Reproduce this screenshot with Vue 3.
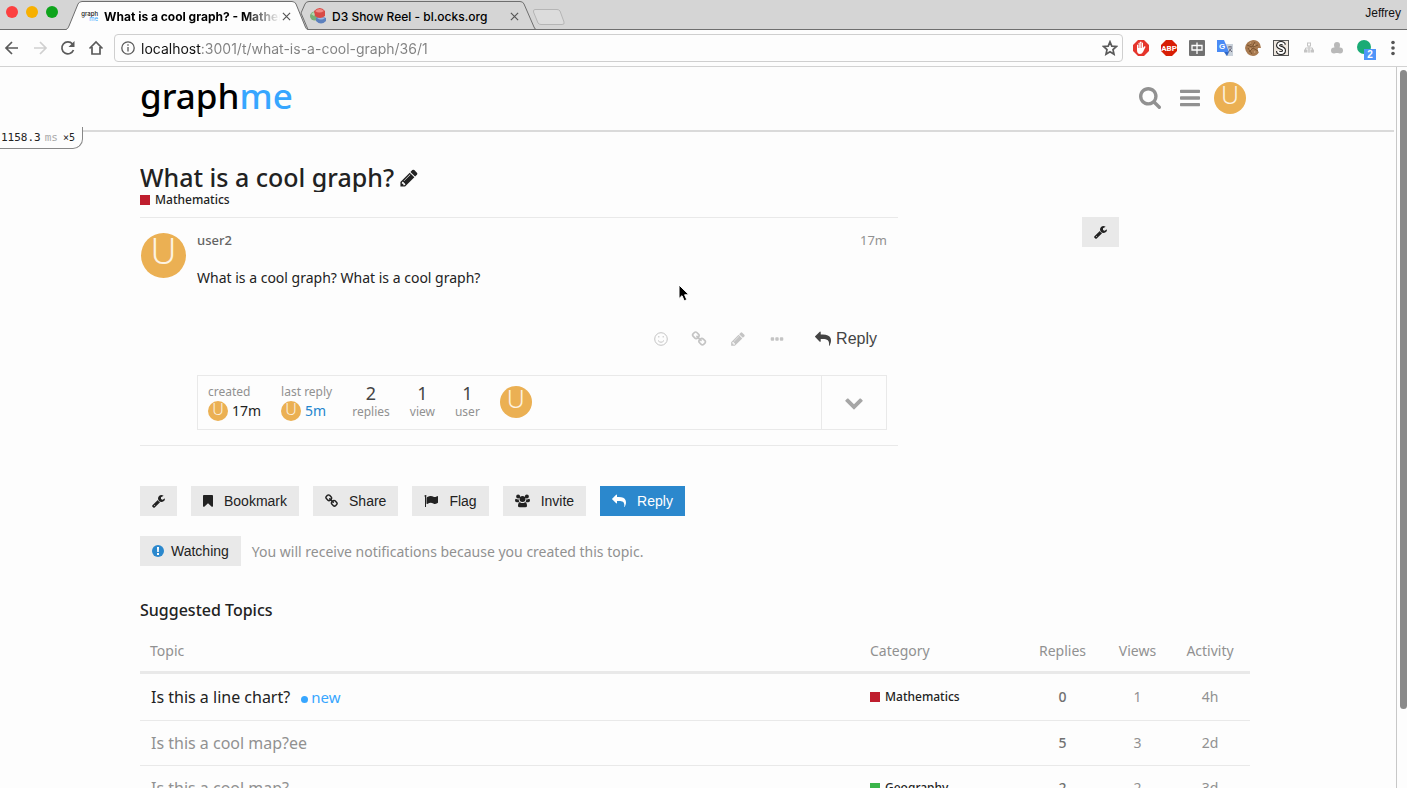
<script setup>
import { h, ref } from 'vue'

const url = ref('localhost:3001/t/what-is-a-cool-graph/36/1')

const glyphs = {
  pencil: { box: '128 0 1536 1792', d: 'M491 1536l91-91-235-235-91 91v107h128v128h107zm523-928q0-22-22-22-10 0-17 7l-542 542q-7 7-7 17 0 22 22 22 10 0 17-7l542-542q7-7 7-17zm-54-192l416 416-832 832h-416v-416zm683 96q0 53-37 90l-166 166-416-416 166-165q36-38 90-38 53 0 91 38l235 234q37 39 37 91z' },
  wrench: { box: '64 0 1664 1792', d: 'M448 1472q0-26-19-45t-45-19-45 19-19 45 19 45 45 19 45-19 19-45zm644-420l-682 682q-37 37-90 37-52 0-91-37l-106-108q-38-36-38-90 0-53 38-91l681-681q39 98 114.5 173.5t173.5 114.5zm634-435q0 39-23 106-47 134-164.5 217.5t-258.5 83.5q-185 0-316.5-131.5t-131.5-316.5 131.5-316.5 316.5-131.5q58 0 121.5 16.5t107.5 46.5q16 11 16 28t-16 28l-293 169v224l193 107q5-3 79-48.5t135.5-81 70.5-35.5q15 0 23.5 10t8.5 25z' },
  reply: { box: '0 0 1792 1792', d: 'M1792 1120q0 166-127 451-3 7-10.5 24t-13.5 30-13 22q-12 17-28 17-15 0-23.5-10t-8.5-25q0-9 2.5-26.5t2.5-23.5q5-68 5-123 0-101-17.5-181t-48.5-138.5-80-101-105.5-69.5-133-42.5-154-21.5-175.5-6h-224v256q0 26-19 45t-45 19-45-19l-512-512q-19-19-19-45t19-45l512-512q19-19 45-19t45 19 19 45v256h224q713 0 875 403 53 134 53 333z' },
  search: { box: '64 128 1664 1664', d: 'M1216 832q0-185-131.5-316.5t-316.5-131.5-316.5 131.5-131.5 316.5 131.5 316.5 316.5 131.5 316.5-131.5 131.5-316.5zm512 832q0 52-38 90t-90 38q-54 0-90-38l-343-342q-179 124-399 124-143 0-273.5-55.5t-225-150-150-225-55.5-273.5 55.5-273.5 150-225 225-150 273.5-55.5 273.5 55.5 225 150 150 225 55.5 273.5q0 220-124 399l343 343q37 37 37 90z' },
  bars: { box: '128 128 1536 1536', d: 'M1664 1344v128q0 26-19 45t-45 19h-1408q-26 0-45-19t-19-45v-128q0-26 19-45t45-19h1408q26 0 45 19t19 45zm0-512v128q0 26-19 45t-45 19h-1408q-26 0-45-19t-19-45v-128q0-26 19-45t45-19h1408q26 0 45 19t19 45zm0-512v128q0 26-19 45t-45 19h-1408q-26 0-45-19t-19-45v-128q0-26 19-45t45-19h1408q26 0 45 19t19 45z' },
  flag: { box: '0 0 1792 1792', d: 'M320 256q0 72-64 110v1266q0 13-9.5 22.5t-22.5 9.5h-64q-13 0-22.5-9.5t-9.5-22.5v-1266q-64-38-64-110 0-53 37.5-90.5t90.5-37.5 90.5 37.5 37.5 90.5zm1472 64v763q0 25-12.5 38.5t-39.5 27.5q-215 116-369 116-61 0-123.5-22t-108.5-48-115.5-48-142.5-22q-192 0-464 146-17 9-33 9-26 0-45-19t-19-45v-742q0-32 31-55 21-14 79-43 236-120 421-120 107 0 200 29t219 88q38 19 88 19 54 0 117.5-21t110-47 88-47 54.5-21q26 0 45 19t19 45z' },
  bookmark: { box: '256 0 1280 1792', d: 'M1420 128q23 0 44 9 33 13 52.5 41t19.5 62v1289q0 34-19.5 62t-52.5 41q-19 8-44 8-48 0-83-32l-441-424-441 424q-36 33-83 33-23 0-44-9-33-13-52.5-41t-19.5-62v-1289q0-34 19.5-62t52.5-41q21-9 44-9h1048z' },
  link: { box: '64 0 1664 1792', d: 'M1520 1216q0-40-28-68l-208-208q-28-28-68-28-42 0-72 32 3 3 19 18.5t21.5 21.5 15 19 13 25.5 3.5 27.5q0 40-28 68t-68 28q-15 0-27.5-3.5t-25.5-13-19-15-21.5-21.5-18.5-19q-33 31-33 73 0 40 28 68l206 207q27 27 68 27 40 0 68-26l147-146q28-28 28-67zm-703-705q0-40-28-68l-206-207q-28-28-68-28-39 0-68 27l-147 146q-28 28-28 67 0 40 28 68l208 208q27 27 68 27 42 0 72-31-3-3-19-18.5t-21.5-21.5-15-19-13-25.5-3.5-27.5q0-40 28-68t68-28q15 0 27.5 3.5t25.5 13 19 15 21.5 21.5 18.5 19q33-31 33-73zm895 705q0 120-85 203l-147 146q-83 83-203 83-121 0-204-85l-206-207q-83-83-83-203 0-123 88-209l-88-88q-86 88-208 88-120 0-204-84l-208-208q-84-84-84-204t85-203l147-146q83-83 203-83 121 0 204 85l206 207q83 83 83 203 0 123-88 209l88 88q86-88 208-88 120 0 204 84l208 208q84 84 84 204z' },
  chevron: { box: '64 128 1664 1664', d: 'M1683 808l-742 741q-19 19-45 19t-45-19l-742-741q-19-19-19-45.5t19-45.5l166-165q19-19 45-19t45 19l531 531 531-531q19-19 45-19t45 19l166 165q19 19 19 45.5t-19 45.5z' },
  dots: { box: '192 0 1408 1792', d: 'M288 704h192q96 0 96 96v192q0 96-96 96h-192q-96 0-96-96v-192q0-96 96-96zM800 704h192q96 0 96 96v192q0 96-96 96h-192q-96 0-96-96v-192q0-96 96-96zM1312 704h192q96 0 96 96v192q0 96-96 96h-192q-96 0-96-96v-192q0-96 96-96z' },
  users: { box: '0 0 1920 1792', d: 'M400 64a256 256 0 1 1 0 512a256 256 0 1 1 0-512zM1520 64a256 256 0 1 1 0 512a256 256 0 1 1 0-512zM960 256a384 384 0 1 1 0 768a384 384 0 1 1 0-768zM120 600q130 90 280 90 50 0 80-10-10 220 90 364h-350q-220 0-220-200 0-224 120-224zM1800 600q-130 90-280 90-50 0-80-10 10 220-90 364h350q220 0 220-200 0-224-120-224zM640 1050q140 110 320 110t320-110q256 20 256 480 0 174-220 174h-712q-220 0-220-174 0-460 256-480z' }
}

const Glyph = (props) =>
  h('svg', { class: 'glyph', viewBox: glyphs[props.name].box, 'aria-hidden': 'true' }, [
    h('path', { d: glyphs[props.name].d })
  ])
Glyph.props = ['name']

const actions = [
  { label: 'Bookmark', icon: 'bookmark', size: 'w10' },
  { label: 'Share', icon: 'link', size: 'w13' },
  { label: 'Flag', icon: 'flag', size: 'w14' },
  { label: 'Invite', icon: 'users', size: 'w15' },
  { label: 'Reply', icon: 'reply', size: 'w14', primary: true }
]

const stats = [
  { n: 2, label: 'replies' },
  { n: 1, label: 'view' },
  { n: 1, label: 'user' }
]

const topics = [
  { title: 'Is this a line chart?', fresh: true, category: 'Mathematics', color: 'red', replies: 0, views: 1, activity: '4h' },
  { title: 'Is this a cool map?ee', replies: 5, views: 3, activity: '2d' },
  { title: 'Is this a cool map?', category: 'Geography', color: 'green', replies: 2, views: 2, activity: '3d' }
]
</script>

<template>
  <div class="window">
    <div class="tabstrip">
      <div class="lights"><i class="close"></i><i class="min"></i><i class="max"></i></div>
      <div class="tab active">
        <svg class="shape" viewBox="0 0 242 30" preserveAspectRatio="none" aria-hidden="true">
          <path class="fill" d="M0 30L3 26L12 4Q13 1 16 1H226Q229 1 230 4L239 27L242 30z" />
          <path class="line" d="M0 29.500Q2 29 3 26L12 4Q13 1.500 16 1.500H226Q229 1.500 230 4L239 26Q240 29.500 242 29.500" />
        </svg>
        <span class="fav"><b>graph</b><em>me</em></span>
        <span class="tab-title">What is a cool graph? - Mathematics</span>
        <button class="x" aria-label="Close tab"><svg viewBox="0 0 10 10"><path d="M1 1L9 9M9 1L1 9" /></svg></button>
      </div>
      <div class="tab second">
        <svg class="shape" viewBox="0 0 236 30" preserveAspectRatio="none" aria-hidden="true">
          <path class="line" d="M1 13L5 4Q6 1.500 9 1.500H220Q223 1.500 224 4L234 27Q235 29.500 236 29.500M1 13L8 29.500" />
        </svg>
        <svg class="d3" viewBox="0 0 16 16" aria-hidden="true">
          <ellipse cx="5" cy="8" rx="5" ry="4.500" fill="#79b077" />
          <path fill="#b4d8b0" d="M1 6l3-2 2 2-2 2z" />
          <path fill="#5c80bd" d="M6 10q5-3 10 0v3q-5 5-10 0z" />
          <path fill="#9bb7e3" d="M7 10q4-2 8 0-4 3-8 0z" />
          <path fill="#d84a45" d="M4 3q6-6 11 0v5q-5 4-10 0z" />
          <path fill="#f08a84" d="M5 3q5-4 9 0-5 3-9 0z" />
        </svg>
        <span class="tab-title plain">D3 Show Reel - bl.ocks.org</span>
        <button class="x" aria-label="Close tab"><svg viewBox="0 0 10 10"><path d="M1 1L9 9M9 1L1 9" /></svg></button>
      </div>
      <button class="newtab" aria-label="New tab">
        <svg viewBox="0 0 34 18"><path d="M3 1.500H25Q27 1.500 28 3L32 14Q33 16.500 30 16.500H9Q7 16.500 6 15L1.500 4Q1 1.500 3 1.500z" /></svg>
      </button>
      <span class="profile">Jeffrey</span>
    </div>

    <div class="toolbar">
      <div class="nav">
        <button aria-label="Back"><svg viewBox="0 0 16 16"><path d="M14 8H2M8 2L2 8L8 14" /></svg></button>
        <button class="off" aria-label="Forward"><svg viewBox="0 0 16 16"><path d="M2 8H14M8 2L14 8L8 14" /></svg></button>
        <button aria-label="Reload"><svg viewBox="0 0 16 16"><path d="M13.500 10A6 6 0 1 1 12.500 4" /><path class="solid" d="M14.500 1V7H8.500z" /></svg></button>
        <button aria-label="Home"><svg viewBox="0 0 16 16"><path d="M1.500 8.500L8 2L14.500 8.500M4 7V14H12V7" /></svg></button>
      </div>
      <div class="omnibox">
        <svg class="info" viewBox="0 0 14 14" aria-hidden="true"><circle cx="7" cy="7" r="6.200" /><path d="M7 6V10.500M7 3.300V4.800" /></svg>
        <input v-model="url" aria-label="Address" spellcheck="false" />
        <button class="star" aria-label="Bookmark page"><svg viewBox="0 0 16 16"><path d="M8 1.800L9.800 6.100L14.500 6.500L11 9.600L12 14.200L8 11.700L4 14.200L5 9.600L1.500 6.500L6.200 6.100z" /></svg></button>
      </div>
      <div class="ext">
        <svg viewBox="0 0 16 16"><path fill="#e5352c" d="M5 0h6l5 5v6l-5 5H5l-5-5V5z" /><path fill="#fff" d="M4 8V5q1-1 1.500 0V3q1-1 1.500 0V2q1-1 1.500 0V3q1-1 1.500 0v5l1-1.500q1.500-.5 1.500.5L10 12q-1 2-3 2-3 0-3-4z" /><path stroke="#e5352c" stroke-width=".5" d="M5.500 4v4M7 3v5M8.500 3v5" /></svg>
        <svg viewBox="0 0 16 16"><path fill="#d81e05" d="M5 0h6l5 5v6l-5 5H5l-5-5V5z" /><text x="8" y="11" text-anchor="middle" class="abp">ABP</text></svg>
        <svg viewBox="0 0 16 16"><rect width="16" height="16" rx="1" fill="#717171" /><path fill="none" stroke="#fff" stroke-width="1.300" d="M3 5.500H13V10H3zM8 2.500V14" /></svg>
        <svg viewBox="0 0 16 16"><path fill="#c9d1da" d="M6 4h10v12H9z" /><path fill="#4a8bf5" d="M0 0h7l5 12H0z" /><path fill="#2f66c4" d="M7 12h5l-2 4z" /><text x="2" y="9" class="gt">G</text><path stroke="#667" fill="none" d="M11 7h4M13 6v1M14.500 8l-3 4M12 8.500l3 3.500" /></svg>
        <svg viewBox="0 0 16 16"><path fill="#a87a50" d="M8 0q5 0 7 4l1 4-3 0q-1 3 1 4-2 4-6 4-7-1-8-8 1-7 8-8z" /><path stroke="#7a5430" fill="none" d="M2 5l5 2 3-5M4 12l4-4 5 3M3 8l4 6M8 7l5-2M5 2l1 3" /><path fill="#d0a77c" d="M4 3l2-1v2zM9 4l2 1-2 1zM4 9l2-1v2zM9 11l2 1-2 1z" /></svg>
        <svg viewBox="0 0 16 16"><rect x=".5" y=".5" width="15" height="15" fill="#eee7df" stroke="#555" /><path fill="none" stroke="#222" stroke-width="4" d="M11 5Q10.500 3 8 3T5 5.300Q5 7 8 7.800T11 10.500Q11 13 8 13T5 11" /><path fill="none" stroke="#fff" stroke-width="1.800" d="M11 5Q10.500 3 8 3T5 5.300Q5 7 8 7.800T11 10.500Q11 13 8 13T5 11" /></svg>
        <svg viewBox="0 0 16 16"><g fill="none" stroke="#c4c4c4"><rect x="6.500" y="3" width="3" height="3" /><rect x="3.500" y="10" width="2" height="2" /><rect x="7" y="10" width="2" height="2" /><rect x="10.500" y="10" width="2" height="2" /><path d="M8 6v4M4.500 10V8h7v2" /></g></svg>
        <svg viewBox="0 0 16 16"><g fill="#b9b9b9"><circle cx="8" cy="5" r="3" /><circle cx="5" cy="10.500" r="3" /><circle cx="11" cy="10.500" r="3" /><path d="M6 5h4l2 8H4z" /></g></svg>
        <span class="dotext"><i></i><b>2</b></span>
        <button aria-label="Menu"><svg viewBox="0 0 16 16"><g fill="#555"><circle cx="8" cy="2.500" r="1.800" /><circle cx="8" cy="8" r="1.800" /><circle cx="8" cy="13.500" r="1.800" /></g></svg></button>
      </div>
    </div>

    <div class="viewport">
      <main class="page">
        <header class="site">
          <div class="wrap bar">
            <a class="logo" href="#">graph<span>me</span></a>
            <div class="tools">
              <button aria-label="Search"><Glyph name="search" class="s22" /></button>
              <button aria-label="Menu"><Glyph name="bars" class="s24" /></button>
              <a class="avatar a32" href="#"><span>U</span></a>
            </div>
          </div>
        </header>
        <div class="profiler">1158.3 <span>ms</span> <small>×5</small></div>

        <div class="body">
          <div class="wrap">
            <div class="titleline">
              <h1>What is a cool graph?</h1>
              <button aria-label="Edit title"><Glyph name="pencil" class="s20" /></button>
            </div>
            <a class="cat" href="#"><i class="red"></i>Mathematics</a>

            <div class="columns">
              <section class="stream">
                <article class="post">
                  <a class="avatar a45" href="#"><span>U</span></a>
                  <div class="content">
                    <div class="meta"><a class="user" href="#">user2</a><a class="when" href="#">17m</a></div>
                    <p>What is a cool graph? What is a cool graph?</p>
                    <div class="controls">
                      <button aria-label="React"><svg class="smile" viewBox="0 0 14 14"><circle cx="7" cy="7" r="6.300" /><path d="M4 8.500Q7 12 10 8.500" /><path class="eyes" d="M4.800 4v1.500M9.200 4v1.500" /></svg></button>
                      <button aria-label="Link"><Glyph name="link" class="s16" /></button>
                      <button aria-label="Edit"><Glyph name="pencil" class="s16" /></button>
                      <button aria-label="More"><Glyph name="dots" class="s16" /></button>
                      <button class="reply"><Glyph name="reply" class="s16" />Reply</button>
                    </div>
                    <div class="map">
                      <div class="pair"><span>created</span><div><a class="avatar a20" href="#"><span>U</span></a><b>17m</b></div></div>
                      <div class="pair"><span>last reply</span><div><a class="avatar a20" href="#"><span>U</span></a><a class="blue" href="#">5m</a></div></div>
                      <div v-for="s in stats" :key="s.label" class="stat"><b>{{ s.n }}</b><span>{{ s.label }}</span></div>
                      <a class="avatar a32" href="#"><span>U</span></a>
                      <button class="expand" aria-label="Expand summary"><Glyph name="chevron" class="s18" /></button>
                    </div>
                  </div>
                </article>
              </section>
              <button class="btn admin" aria-label="Topic admin"><Glyph name="wrench" class="w13" /></button>
            </div>

            <div class="buttons">
              <button class="btn" aria-label="Topic admin"><Glyph name="wrench" class="w13" /></button>
              <button v-for="a in actions" :key="a.label" class="btn" :class="{ primary: a.primary }"><Glyph :name="a.icon" :class="a.size" />{{ a.label }}</button>
            </div>
            <div class="notify">
              <button class="btn watch"><svg class="bang" viewBox="0 0 12 12" aria-hidden="true"><circle cx="6" cy="6" r="6" /><path d="M5 2H7L6.800 7H5.200zM5 8H7V10H5z" /></svg>Watching</button>
              <span>You will receive notifications because you created this topic.</span>
            </div>

            <h3>Suggested Topics</h3>
            <table>
              <thead>
                <tr><th class="topic">Topic</th><th class="category">Category</th><th class="num">Replies</th><th class="num">Views</th><th class="num last">Activity</th></tr>
              </thead>
              <tbody>
                <tr v-for="t in topics" :key="t.title" :class="{ fresh: t.fresh }">
                  <td class="topic"><a href="#">{{ t.title }}</a><a v-if="t.fresh" class="new" href="#"><i></i>new</a></td>
                  <td class="category"><a v-if="t.category" class="cat" href="#"><i :class="t.color"></i>{{ t.category }}</a></td>
                  <td class="num strong">{{ t.replies }}</td>
                  <td class="num">{{ t.views }}</td>
                  <td class="num last">{{ t.activity }}</td>
                </tr>
              </tbody>
            </table>
          </div>
        </div>
        <svg class="cursor" viewBox="0 0 12 18" aria-hidden="true"><path d="M1 1V14.500L4 11.700L6.200 16.800L8.800 15.700L6.600 10.800H11z" /></svg>
      </main>
      <div class="scroll"><i></i></div>
    </div>
  </div>
</template>

<style>
html, body { height: 100%; overflow: hidden; background: #fdfdfd; }
</style>

<style scoped>
* { box-sizing: border-box; }
button { border: 0; padding: 0; background: none; font: inherit; color: inherit; display: flex; align-items: center; justify-content: center; }
a { color: inherit; text-decoration: none; }
svg { display: block; }
.glyph { fill: currentColor; flex: none; }
.window { height: 100vh; display: flex; flex-direction: column; overflow: hidden; font-family: "Noto Sans", sans-serif; font-size: 14px; color: #222; }

.tabstrip { height: 30px; flex: none; background: #d5d5d5; border-bottom: 1px solid #6e6e6e; display: flex; font-family: Inter, Roboto, sans-serif; font-size: 12px; color: #111; }
.lights { width: 66px; display: flex; gap: 8px; padding: 6px 0 0 6px; flex: none; }
.lights i { width: 12px; height: 12px; border-radius: 50%; }
.close { background: #fc4040; }
.min { background: #f7b000; }
.max { background: #0ea41c; }
.tab { position: relative; width: 242px; height: 30px; display: flex; align-items: center; padding: 2px 16px 0; flex: none; }
.tab > * { position: relative; }
.tab .shape { position: absolute; inset: 0; width: 100%; height: 100%; }
.tab.active { z-index: 1; }
.tab.second { width: 236px; margin-left: -8px; padding-left: 10px; }
.fill { fill: #fdfdfd; }
.line { fill: none; stroke: #6e6e6e; }
.fav { width: 16px; font-size: 6px; line-height: 5px; display: flex; flex-direction: column; align-items: flex-end; margin-right: 6px; }
.fav b { font-weight: 500; }
.fav em { font-style: normal; color: #37a6ff; }
.tab-title { flex: 1; min-width: 0; overflow: hidden; white-space: nowrap; font-weight: 700; color: #000; mask-image: linear-gradient(90deg, #000 80%, transparent); }
.tab-title.plain { font-weight: 500; mask-image: none; margin-left: 6px; }
.d3 { width: 16px; height: 16px; }
.x { width: 12px; height: 12px; }
.x svg { width: 9px; height: 9px; fill: none; stroke: #555; stroke-width: 1.300; }
.newtab svg { width: 34px; height: 18px; fill: #dcdcdc; stroke: #b5b5b5; }
.newtab { margin: 4px 0 0 -4px; }
.profile { margin-left: auto; padding: 6px 6px 0 0; font-family: "Liberation Sans", Arial, sans-serif; }

.toolbar { height: 37px; flex: none; border-bottom: 1px solid #d2d2d2; display: flex; align-items: center; padding: 0 6px 0 4px; gap: 10px; }
.nav { display: flex; gap: 12px; }
.nav svg, .star svg { width: 16px; height: 16px; fill: none; stroke: #5a5a5a; stroke-width: 1.700; }
.nav .off svg { stroke: #d0d0d0; }
.nav svg .solid { fill: #5a5a5a; stroke: none; }
.omnibox { flex: 1; height: 28px; border: 1px solid #cfcfcf; border-radius: 4px; display: flex; align-items: center; padding: 0 4px 0 6px; gap: 6px; }
.info { width: 14px; height: 14px; fill: none; stroke: #5a5a5a; stroke-width: 1.300; }
.omnibox input { flex: 1; min-width: 0; border: 0; padding: 0; outline: 0; font: 14px Inter, Roboto, sans-serif; color: transparent; background: linear-gradient(90deg, #111 60px, #808080 60px); background-clip: text; }
.ext { display: flex; align-items: center; gap: 12px; }
.ext > svg, .ext button svg { width: 16px; height: 16px; }
.abp { font: 700 8px Roboto, Arial, sans-serif; fill: #fff; }
.gt { font: 700 8px "Liberation Sans", Arial, sans-serif; fill: #fff; }
.dotext { position: relative; width: 16px; height: 16px; }
.dotext i { display: block; width: 14px; height: 14px; border-radius: 50%; background: #1aab75; }
.dotext b { position: absolute; left: 7px; top: 9px; width: 12px; height: 11px; background: #4f95f9; color: #fff; font: 700 10px/11px "Liberation Sans", Arial, sans-serif; text-align: center; }

.viewport { flex: 1; min-height: 0; display: flex; }
.page { flex: 1; min-width: 0; position: relative; overflow: hidden; }
.scroll { width: 11px; flex: none; border-left: 1px solid #c8c8c8; padding: 3px 0 0 3px; }
.scroll i { display: block; height: 89%; background: #8a8a8a; border-radius: 4px; }
.wrap { max-width: 1110px; margin: 0 auto; }
.site { padding-right: 4px; margin-right: 2px; border-bottom: 2px solid #dadada; }
.body { padding: 32px 6px 0 0; }
.bar { height: 63px; display: flex; align-items: center; justify-content: space-between; padding-bottom: 2px; }
.logo { font-size: 35px; line-height: 40px; font-weight: 500; color: #000; padding-bottom: 3px; }
.logo span { color: #37a6ff; }
.tools { display: flex; align-items: center; gap: 14px; color: #919191; padding-right: 4px; }
.s22 { width: 22px; height: 22px; margin-right: 5px; }
.s24 { width: 20px; height: 22px; }
.s20 { width: 18px; height: 20px; }
.s18 { width: 18px; height: 18px; }
.s16 { width: 16px; height: 16px; }
.w10 { width: 10px; height: 14px; }
.w13 { width: 13px; height: 14px; }
.w14 { width: 14px; height: 14px; }
.w15 { width: 15px; height: 14px; }
.avatar { flex: none; border-radius: 50%; background: #ebb053; color: #fdf3e2; display: flex; align-items: center; justify-content: center; font-family: "Noto Sans", sans-serif; font-weight: 300; }
.a45 { width: 45px; height: 45px; font-size: 36px; line-height: 36px; padding-bottom: 9px; }
.a32 { width: 32px; height: 32px; font-size: 25px; line-height: 25px; padding-bottom: 6px; }
.a20 { width: 20px; height: 20px; font-size: 16px; line-height: 16px; padding-bottom: 3px; }
.profiler { position: absolute; left: 0; top: 60px; width: 83px; height: 22px; border: 1px solid #888; border-width: 0 1px 1px 0; border-radius: 0 0 10px 0; background: #fdfdfd; font: 11px/22px "DejaVu Sans Mono", monospace; padding-left: 1px; white-space: nowrap; display: flex; gap: 4px; }
.profiler span { color: #aaa; }
.profiler small { font-size: 10px; margin-left: 1px; }

.titleline { display: flex; align-items: center; gap: 6px; height: 28px; }
h1 { margin: 0; font-size: 25px; line-height: 26px; height: 28px; font-weight: 500; overflow: hidden; }
.cat { display: flex; align-items: center; gap: 5px; font-size: 12px; line-height: 16px; font-weight: 500; color: #222; }
.cat i { width: 10px; height: 10px; }
.red { background: #bf1e2e; }
.green { background: #3ab54a; }
.columns { display: flex; margin-top: 9px; }
.stream { flex: 0 1 758px; border: 1px solid #e9e9e9; border-width: 1px 0; padding: 15px 11px 15px 1px; }
.admin { margin-left: 184px; }
.post { display: flex; gap: 11px; }
.content { flex: 1; min-width: 0; }
.meta { display: flex; justify-content: space-between; font-size: 13px; line-height: 14px; color: #919191; }
.user { font-weight: 500; color: #646464; }
p { margin: 21px 0 0; line-height: 20px; }
.controls { display: flex; align-items: center; justify-content: flex-end; gap: 23px; height: 32px; margin-top: 35px; padding-right: 10px; color: #c4c4c4; }
.smile { width: 14px; height: 14px; fill: none; stroke: currentColor; }
.reply { color: #444; font: 16px "Liberation Sans", Arial, sans-serif; gap: 5px; margin-left: 7px; }
.map { margin-top: 20px; height: 55px; border: 1px solid #e9e9e9; padding-left: 10px; display: flex; align-items: center; gap: 20px; line-height: 18px; }
.map > :not(.expand) { margin-bottom: 2px; }
.pair span, .stat span { font-size: 12px; color: #919191; }
.pair > span { display: block; }
.pair div { display: flex; align-items: center; gap: 4px; height: 20px; }
.pair b { font-weight: 400; }
.pair .avatar span { color: #fdf3e2; font-size: 16px; }
.blue { color: #2385cd; }
.stat { display: flex; flex-direction: column; align-items: center; }
.stat b { font-size: 18px; line-height: 20px; font-weight: 400; color: #444; }
.expand { margin-left: auto; width: 65px; align-self: stretch; border-left: 1px solid #e9e9e9; color: #a6a6a6; }

.buttons { display: flex; gap: 14px; margin-top: 40px; }
.btn { height: 30px; padding: 0 12px; gap: 11px; background: #e9e9e9; color: #222; font: 14px "Liberation Sans", Arial, sans-serif; white-space: nowrap; flex: none; }
.btn.primary { background: #2b88cd; color: #fff; }
.notify { display: flex; align-items: center; gap: 11px; margin-top: 20px; color: #919191; }
.watch { gap: 7px; }
.bang { width: 12px; height: 12px; fill: #2b88cd; }
.bang path { fill: #fff; }
h3 { margin: 33px 0 0; font-size: 16px; line-height: 22px; font-weight: 500; }
table { width: 100%; margin-top: 9px; border-collapse: collapse; table-layout: fixed; color: #919191; }
th { height: 42px; font-weight: 400; border-bottom: 3px solid #e9e9e9; padding: 0; text-align: left; }
td { height: 45px; border-bottom: 1px solid #e9e9e9; padding: 0; }
tr.fresh td { height: 48px; }
th.topic { padding-left: 10px; }
td.topic { padding-left: 11px; font-size: 16px; }
.fresh .topic a { color: #222; }
.fresh .topic .new { color: #37a6ff; font-size: 15px; margin-left: 11px; }
.new i { display: inline-block; width: 7px; height: 7px; border-radius: 50%; background: #37a6ff; margin-right: 3px; }
th.category, td.category { width: 155px; }
th.num, td.num { width: 75px; text-align: center; }
th.last, td.last { padding-right: 5px; }
.strong { font-weight: 500; color: #717171; }
.cursor { position: absolute; left: 678px; top: 217px; width: 12px; height: 18px; fill: #000; stroke: #fff; }
</style>
